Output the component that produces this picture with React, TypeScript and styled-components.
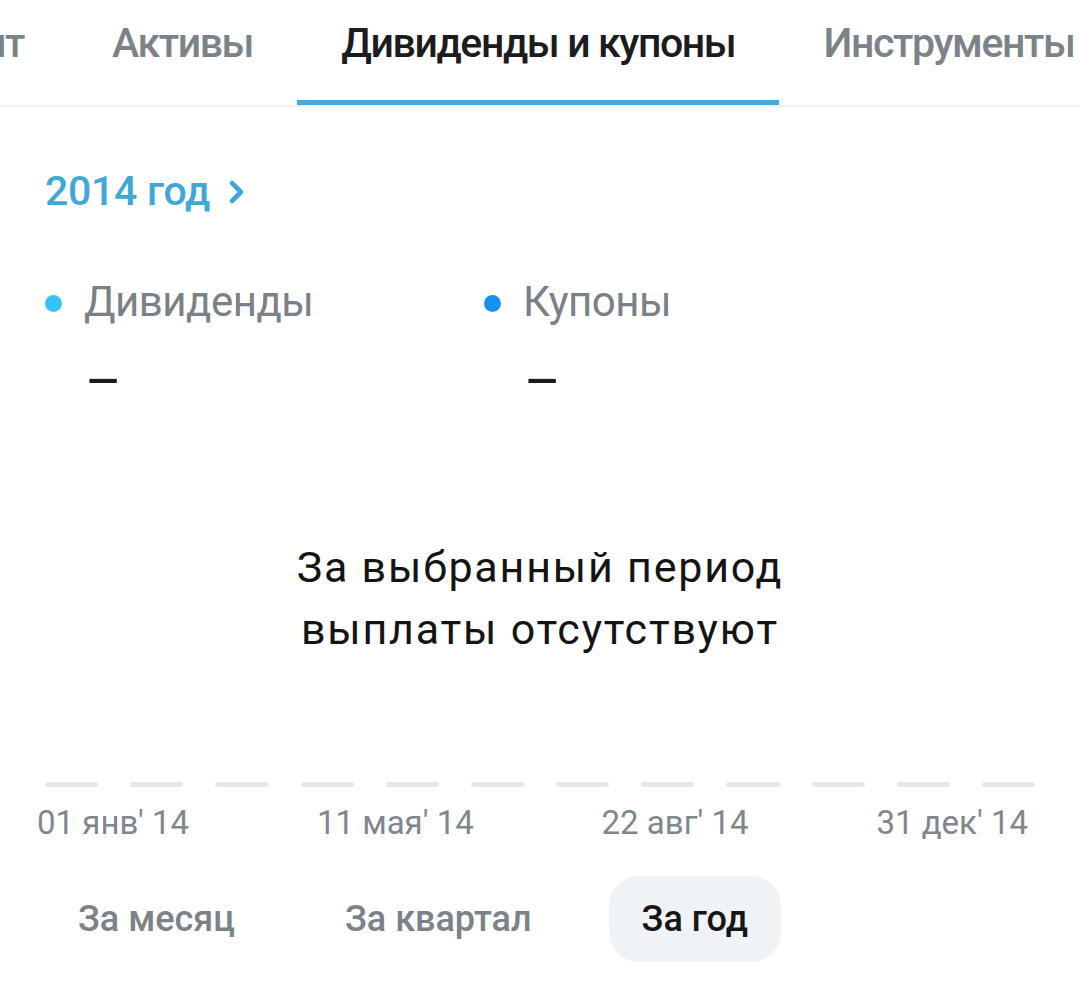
import { createGlobalStyle } from 'styled-components';
import styled from 'styled-components';

const GlobalStyle = createGlobalStyle`
  html, body {
    margin: 0;
    padding: 0;
    background: #ffffff;
  }
  body {
    font-family: Roboto, 'Noto Sans', sans-serif;
    -webkit-font-smoothing: antialiased;
  }
`;

const tabs = ['Аккаунт', 'Активы', 'Дивиденды и купоны', 'Инструменты'];
const activeTab = 2;

const dates = ["01 янв' 14", "11 мая' 14", "22 авг' 14", "31 дек' 14"];
const periods = ['За месяц', 'За квартал', 'За год'];
const activePeriod = 2;

export default function App() {
  return (
    <Page>
      <GlobalStyle />
      <TabBar>
        <TabStrip>
          {tabs.map((t, i) => (
            <Tab key={t} $active={i === activeTab}>
              {t}
            </Tab>
          ))}
        </TabStrip>
      </TabBar>

      <Content>
        <YearLink>
          2014 год
          <svg width="20" height="28" viewBox="0 0 20 28">
            <path d="M5 5 L14 14 L5 23" fill="none" stroke="currentColor" strokeWidth="4.6" strokeLinecap="round" strokeLinejoin="round" />
          </svg>
        </YearLink>

        <Legend>
          <LegendItem>
            <LegendLabel>
              <Dot $color="#35c3f5" />
              Дивиденды
            </LegendLabel>
            <LegendValue>–</LegendValue>
          </LegendItem>
          <LegendItem>
            <LegendLabel>
              <Dot $color="#1690f0" />
              Купоны
            </LegendLabel>
            <LegendValue>–</LegendValue>
          </LegendItem>
        </Legend>

        <EmptyMessage>
          За выбранный период
          <br />
          выплаты отсутствуют
        </EmptyMessage>

        <Axis>
          {Array.from({ length: 12 }).map((_, i) => (
            <Tick key={i} />
          ))}
        </Axis>
        <DateRow>
          {dates.map((d) => (
            <DateLabel key={d}>{d}</DateLabel>
          ))}
        </DateRow>

        <PeriodRow>
          {periods.map((p, i) => (
            <PeriodButton key={p} $active={i === activePeriod}>
              {p}
            </PeriodButton>
          ))}
        </PeriodRow>
      </Content>
    </Page>
  );
}

const Page = styled.div`
  width: 1080px;
  height: 1007px;
  overflow: hidden;
  background: #fff;
`;

const TabBar = styled.div`
  overflow: hidden;
  border-bottom: 2px solid #eef2f4;
`;

// the strip is scrolled so the active tab sits near the middle
const TabStrip = styled.div`
  display: flex;
  margin-left: -168px;
  white-space: nowrap;
`;

const Tab = styled.div<{ $active?: boolean }>`
  flex: none;
  height: 105px;
  box-sizing: border-box;
  padding: 19px 44px 0;
  font-size: 41px;
  font-weight: 500;
  letter-spacing: -1.4px;
  color: ${(p) => (p.$active ? '#1c1c1e' : '#7c8388')};
  border-bottom: 5px solid ${(p) => (p.$active ? '#45acd9' : 'transparent')};
`;

const Content = styled.div`
  padding: 0 45px;
  display: flex;
  flex-direction: column;
`;

const YearLink = styled.div`
  margin-top: 60px;
  display: flex;
  align-items: center;
  gap: 17px;
  font-size: 41px;
  font-weight: 500;
  letter-spacing: -0.3px;
  color: #3fa8d6;
  line-height: 48px;

  svg {
    margin-top: 2px;
  }
`;

const Legend = styled.div`
  margin-top: 62px;
  display: grid;
  grid-template-columns: 439px 1fr;
`;

const LegendItem = styled.div`
  display: flex;
  flex-direction: column;
`;

const LegendLabel = styled.div`
  display: flex;
  align-items: center;
  gap: 22px;
  font-size: 42px;
  letter-spacing: -0.5px;
  color: #798187;
  line-height: 50px;
`;

const Dot = styled.span<{ $color: string }>`
  width: 17px;
  height: 17px;
  border-radius: 50%;
  background: ${(p) => p.$color};
  margin-top: 2px;
`;

const LegendValue = styled.div`
  padding-left: 40px;
  margin-top: 27px;
  font-size: 56px;
  line-height: 56px;
  color: #1a1a1a;
`;

const EmptyMessage = styled.div`
  margin-top: 126px;
  text-align: center;
  font-size: 43px;
  letter-spacing: 1.8px;
  line-height: 62px;
  color: #141414;
`;

const Axis = styled.div`
  margin-top: 122px;
  display: grid;
  grid-template-columns: repeat(12, 1fr);
  column-gap: 32px;
  width: 990px;
`;

const Tick = styled.div`
  height: 5px;
  border-radius: 3px;
  background: #e6e9eb;
`;

const DateRow = styled.div`
  margin: 16px 0 0 -8px;
  width: 991px;
  display: flex;
  justify-content: space-between;
`;

const DateLabel = styled.div`
  font-size: 33px;
  line-height: 40px;
  color: #80878c;
`;

const PeriodRow = styled.div`
  margin-top: 33px;
  display: flex;
  gap: 44px;
`;

const PeriodButton = styled.div<{ $active?: boolean }>`
  height: 86px;
  display: flex;
  align-items: center;
  padding: 0 33px;
  border-radius: 30px;
  font-size: 36px;
  font-weight: 500;
  color: ${(p) => (p.$active ? '#161616' : '#7c8388')};
  background: ${(p) => (p.$active ? '#f0f3f6' : 'transparent')};
`;
